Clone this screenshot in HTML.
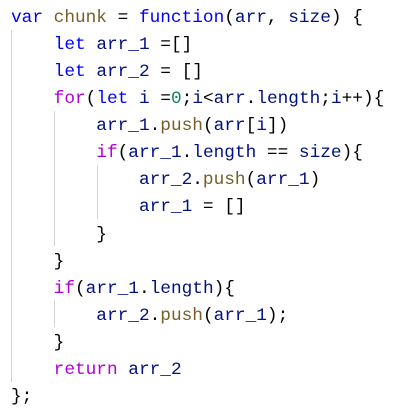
<!DOCTYPE html>
<html><head><style>
html,body{margin:0;padding:0;background:#fff;width:416px;height:413px;overflow:hidden}
pre{margin:0;position:absolute;left:11px;top:5px;font-family:"Liberation Mono",monospace;font-size:17.77px;line-height:27.07px;color:#000}
.k{color:#0000ff}.v{color:#001080}.f{color:#795e26}.c{color:#af00db}.n{color:#098658}
.g{position:absolute;width:1px;background:#d3d3d3}
</style></head><body>
<div class="g" style="left:11px;top:30px;height:352px"></div>
<div class="g" style="left:54px;top:111px;height:135px"></div>
<div class="g" style="left:97px;top:165px;height:54px"></div>
<div class="g" style="left:54px;top:300px;height:27px"></div>
<pre><span class="k">var</span> <span class="f">chunk</span> = <span class="k">function</span>(<span class="v">arr</span>, <span class="v">size</span>) {
    <span class="k">let</span> <span class="v">arr_1</span> =[]
    <span class="k">let</span> <span class="v">arr_2</span> = []
    <span class="c">for</span>(<span class="k">let</span> <span class="v">i</span> =<span class="n">0</span>;<span class="v">i</span>&lt;<span class="v">arr</span>.<span class="v">length</span>;<span class="v">i</span>++){
        <span class="v">arr_1</span>.<span class="f">push</span>(<span class="v">arr</span>[<span class="v">i</span>])
        <span class="c">if</span>(<span class="v">arr_1</span>.<span class="v">length</span> == <span class="v">size</span>){
            <span class="v">arr_2</span>.<span class="f">push</span>(<span class="v">arr_1</span>)
            <span class="v">arr_1</span> = []
        }
    }
    <span class="c">if</span>(<span class="v">arr_1</span>.<span class="v">length</span>){
        <span class="v">arr_2</span>.<span class="f">push</span>(<span class="v">arr_1</span>);
    }
    <span class="c">return</span> <span class="v">arr_2</span>
};</pre>
</body></html>
